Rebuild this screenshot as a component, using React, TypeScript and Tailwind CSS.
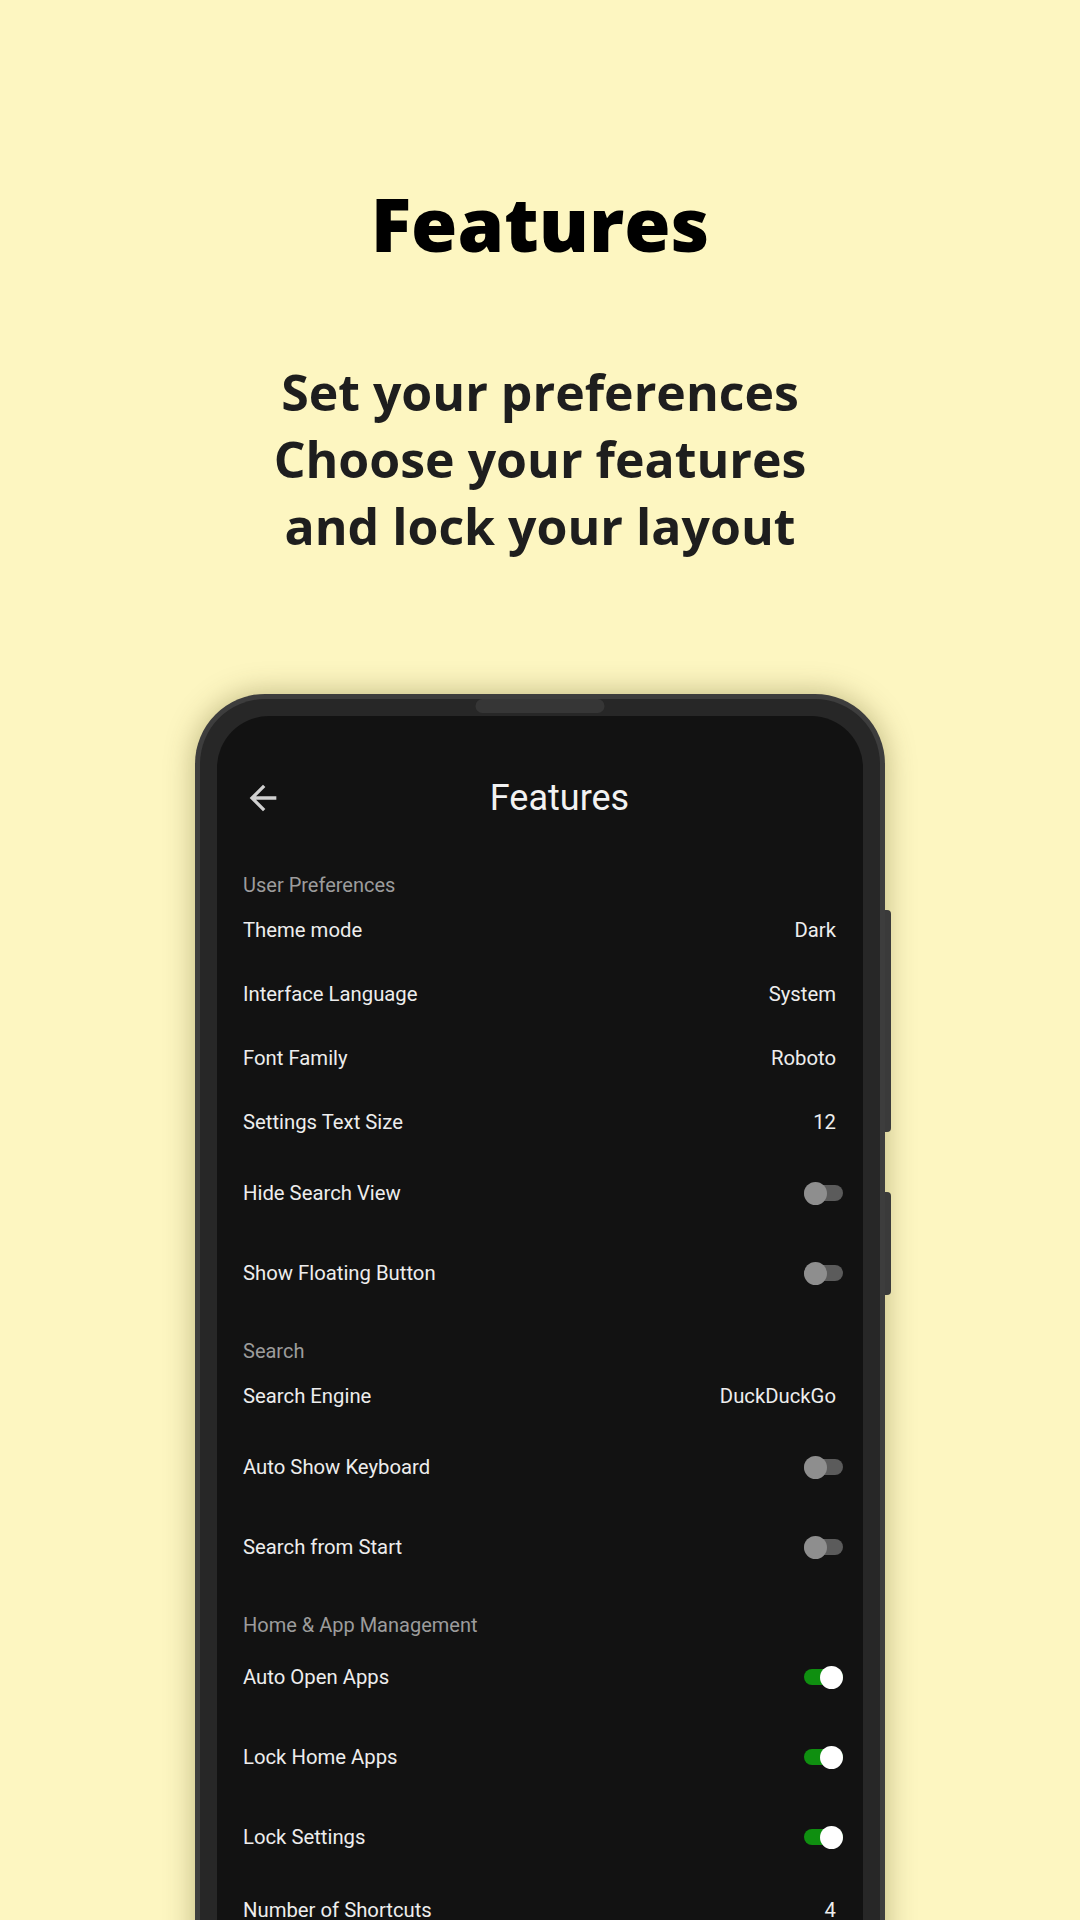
type Row = { label: string; value?: string; on?: boolean }
type Section = { title: string; rows: Row[] }

const sections: Section[] = [
    {
        title: 'User Preferences',
        rows: [
            {label: 'Theme mode', value: 'Dark'},
            {label: 'Interface Language', value: 'System'},
            {label: 'Font Family', value: 'Roboto'},
            {label: 'Settings Text Size', value: '12'},
            {label: 'Hide Search View', on: false},
            {label: 'Show Floating Button', on: false},
        ],
    },
    {
        title: 'Search',
        rows: [
            {label: 'Search Engine', value: 'DuckDuckGo'},
            {label: 'Auto Show Keyboard', on: false},
            {label: 'Search from Start', on: false},
        ],
    },
    {
        title: 'Home & App Management',
        rows: [
            {label: 'Auto Open Apps', on: true},
            {label: 'Lock Home Apps', on: true},
            {label: 'Lock Settings', on: true},
            {label: 'Number of Shortcuts', value: '4'},
        ],
    },
]

function Toggle({on}: { on: boolean }) {
    return (
        <div className="relative w-[39px] h-[23px] -mr-[7px] shrink-0">
            <div className={`absolute left-0 right-0 top-[3.5px] h-[16px] rounded-full ${on ? 'bg-[#0f8f10]' : 'bg-[#5b5b5b]'}`}/>
            <div className={`absolute top-0 w-[23px] h-[23px] rounded-full ${on ? 'right-0 bg-white' : 'left-0 bg-[#8e8e8e]'}`}/>
        </div>
    )
}

function SettingRow({row}: { row: Row }) {
    const isToggle = row.on !== undefined
    return (
        <div className={`flex items-center justify-between ${isToggle ? 'h-[80px] pt-[2px]' : 'h-[64px] pt-[4px]'}`}>
            <span className="text-[20.3px] leading-[24px] text-[#ededed]">{row.label}</span>
            {isToggle ? <Toggle on={!!row.on}/> :
                <span className="text-[20.3px] leading-[24px] text-[#ededed]">{row.value}</span>}
        </div>
    )
}

export default function App() {
    return (
        <div className="w-[1080px] h-[1920px] overflow-hidden bg-[#fdf6c1] flex flex-col items-center pt-[186px]"
             style={{fontFamily: '"Open Sans", "Noto Sans", sans-serif'}}>
            <h1 className="text-[75px] leading-[75px] font-extrabold text-black">Features</h1>
            <p className="mt-[98px] text-[50px] leading-[67px] font-bold text-[#1e1e1e] text-center">
                Set your preferences<br/>
                Choose your features<br/>
                and lock your layout
            </p>

            {/* phone */}
            <div className="relative mt-[134px] w-[690px] shrink-0 rounded-[70px] bg-[#3d3d3d] p-[5px] shadow-[0_0_30px_rgba(70,60,0,0.35)]">
                <div className="absolute top-[5px] left-1/2 -translate-x-1/2 w-[129px] h-[14px] rounded-full bg-[#363636]"/>
                <div className="absolute -right-[6px] top-[216px] w-[6px] h-[222px] rounded-r-[4px] bg-[#3a3a3a]"/>
                <div className="absolute -right-[6px] top-[498px] w-[6px] h-[103px] rounded-r-[4px] bg-[#3a3a3a]"/>

                <div className="rounded-[65px] bg-[#272727] p-[17px]">
                    <div className="rounded-[52px] bg-[#121212] pl-[26px] pr-[27px] pt-[62px] pb-[120px]"
                         style={{fontFamily: 'Roboto, "Noto Sans", sans-serif'}}>
                        <div className="flex items-center h-[40px] mb-[28px]">
                            <svg viewBox="0 0 24 24" className="w-[40px] h-[40px] shrink-0" fill="#d0d0d0">
                                <path d="M20 11H7.83l5.59-5.59L12 4l-8 8 8 8 1.41-1.41L7.83 13H20v-2z"/>
                            </svg>
                            <div className="flex-1 text-center text-[36px] leading-[40px] text-[#f2f2f2]">Features</div>
                        </div>

                        {sections.map((section, i) => (
                            <div key={i}>
                                <div className="h-[50px] pt-[27px] text-[20px] leading-[24px] text-[#9c9c9c]">{section.title}</div>
                                {section.rows.map((row, j) => <SettingRow key={j} row={row}/>)}
                            </div>
                        ))}
                    </div>
                </div>
            </div>
        </div>
    )
}
